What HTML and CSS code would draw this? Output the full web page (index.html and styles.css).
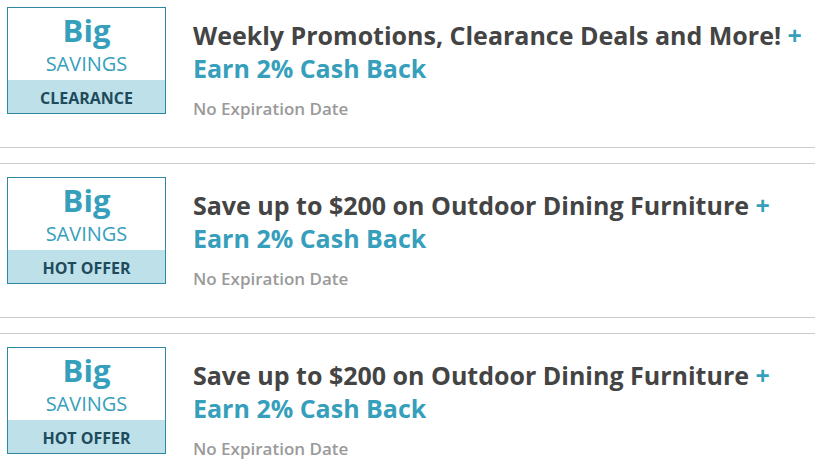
FILE: index.html
```html
<!DOCTYPE html>
<html>
<head>
<meta charset="utf-8">
<link rel="stylesheet" href="styles.css">
</head>
<body>
<ul class="deals">
  <li class="deal">
    <div class="badge">
      <div class="badge-top">
        <span class="big">Big</span>
        <span class="savings">SAVINGS</span>
      </div>
      <div class="badge-band">CLEARANCE</div>
    </div>
    <div class="info">
      <h2 class="title">Weekly Promotions, Clearance Deals and More! <span class="cash">+ Earn 2% Cash Back</span></h2>
      <p class="expiry">No Expiration Date</p>
    </div>
  </li>
  <li class="deal">
    <div class="badge">
      <div class="badge-top">
        <span class="big">Big</span>
        <span class="savings">SAVINGS</span>
      </div>
      <div class="badge-band">HOT OFFER</div>
    </div>
    <div class="info">
      <h2 class="title">Save up to $200 on Outdoor Dining Furniture <span class="cash">+ Earn 2% Cash Back</span></h2>
      <p class="expiry">No Expiration Date</p>
    </div>
  </li>
  <li class="deal">
    <div class="badge">
      <div class="badge-top">
        <span class="big">Big</span>
        <span class="savings">SAVINGS</span>
      </div>
      <div class="badge-band">HOT OFFER</div>
    </div>
    <div class="info">
      <h2 class="title">Save up to $200 on Outdoor Dining Furniture <span class="cash">+ Earn 2% Cash Back</span></h2>
      <p class="expiry">No Expiration Date</p>
    </div>
  </li>
</ul>
</body>
</html>
```

FILE: styles.css
```css
html, body {
  margin: 0;
  padding: 0;
  background: #ffffff;
  font-family: "Open Sans", "Liberation Sans", sans-serif;
}

.deals {
  list-style: none;
  margin: 0;
  padding: 0;
  display: flex;
  flex-direction: column;
  gap: 15px;
}

.deal {
  display: flex;
  align-items: flex-start;
  padding: 13px 0 27px 7px;
  border-top: 1px solid #cccccc;
  border-bottom: 1px solid #cccccc;
}

.deal:first-child {
  border-top: 0;
  padding-top: 7px;
}

.badge {
  width: 157px;
  height: 105px;
  border: 1px solid #2f88a1;
  display: flex;
  flex-direction: column;
  flex-shrink: 0;
}

.badge-top {
  height: 72px;
  display: flex;
  flex-direction: column;
  align-items: center;
  padding-top: 3px;
  box-sizing: border-box;
}

.big {
  font-size: 31px;
  line-height: 38px;
  font-weight: 700;
  color: #36a0bc;
}

.savings {
  font-size: 20px;
  line-height: 30px;
  font-weight: 400;
  color: #36a0bc;
}

.badge-band {
  height: 33px;
  background: #bde0e9;
  display: flex;
  align-items: center;
  justify-content: center;
  padding-top: 2px;
  box-sizing: border-box;
  font-size: 16px;
  font-weight: 700;
  color: #1d4b5b;
}

.info {
  margin-left: 27px;
  padding-top: 12px;
  padding-right: 10px;
}

.title {
  margin: 0;
  font-size: 25px;
  line-height: 33px;
  font-weight: 700;
  color: #444444;
}

.cash {
  color: #36a0bc;
}

.expiry {
  margin: 13px 0 0;
  font-size: 17px;
  line-height: 22px;
  font-weight: 600;
  color: #9a9a9a;
}
```
